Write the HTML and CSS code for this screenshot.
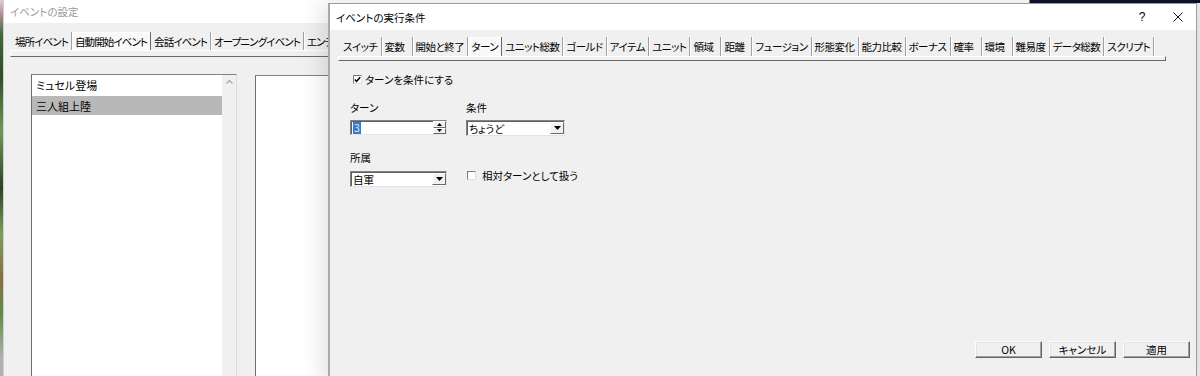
FILE: index.html
```html
<!DOCTYPE html>
<html lang="ja">
<head>
  <meta charset="UTF-8">
  <title>イベントの実行条件</title>
  <link rel="stylesheet" href="styles.css">
</head>
<body>
  <div class="desktop">
    <!-- 壁紙の見えている部分 -->
    <div class="wallpaper-edge"></div>
    <div class="wallpaper-corner"></div>

    <!-- 背面ウィンドウ：イベントの設定 -->
    <section class="window window-back">
      <header class="titlebar"><span class="title">イベントの設定</span></header>
      <div class="window-body">
        <nav class="tabs">
          <span class="tab">場所イベント</span>
          <span class="tab is-active">自動開始イベント</span>
          <span class="tab">会話イベント</span>
          <span class="tab">オープニングイベント</span>
          <span class="tab">エンディングイベント</span>
        </nav>
        <div class="tab-rule"></div>
        <div class="event-panes">
          <div class="listbox">
            <ul class="list-items">
              <li>ミュセル登場</li>
              <li class="is-selected">三人組上陸</li>
            </ul>
            <div class="scrollbar">
              <svg class="scroll-up" viewBox="0 0 7 4"><polyline points="0.5,3.5 3.5,0.5 6.5,3.5" /></svg>
            </div>
          </div>
          <div class="detail-pane"></div>
        </div>
      </div>
    </section>

    <!-- 前面ダイアログ：イベントの実行条件 -->
    <section class="window window-front">
      <header class="titlebar">
        <span class="title">イベントの実行条件</span>
        <div class="caption-buttons">
          <span class="caption-btn">?</span>
          <span class="caption-btn">
            <svg class="close-icon" viewBox="0 0 10 10"><line x1="0.5" y1="0.5" x2="9.5" y2="9.5" /><line x1="9.5" y1="0.5" x2="0.5" y2="9.5" /></svg>
          </span>
        </div>
      </header>
      <div class="window-body">
        <nav class="tabs">
          <span class="tab">スイッチ</span>
          <span class="tab">変数</span>
          <span class="tab">開始と終了</span>
          <span class="tab is-active">ターン</span>
          <span class="tab">ユニット総数</span>
          <span class="tab">ゴールド</span>
          <span class="tab">アイテム</span>
          <span class="tab">ユニット</span>
          <span class="tab">領域</span>
          <span class="tab">距離</span>
          <span class="tab">フュージョン</span>
          <span class="tab">形態変化</span>
          <span class="tab">能力比較</span>
          <span class="tab">ボーナス</span>
          <span class="tab">確率</span>
          <span class="tab">環境</span>
          <span class="tab">難易度</span>
          <span class="tab">データ総数</span>
          <span class="tab">スクリプト</span>
        </nav>
        <div class="tab-rule"></div>

        <label class="check-row">
          <span class="checkbox is-checked">
            <svg viewBox="0 0 7 7"><polyline points="0.8,3.4 2.6,5.3 6.2,1.2" /></svg>
          </span>
          ターンを条件にする
        </label>

        <div class="form-grid">
          <span class="field-label">ターン</span>
          <span class="field-label">条件</span>

          <div class="spin">
            <span class="edit-text"><span class="selected-text">3</span></span>
            <span class="spin-buttons">
              <span class="spin-btn"><svg viewBox="0 0 5 3"><polygon points="0,3 2.5,0 5,3" /></svg></span>
              <span class="spin-btn"><svg viewBox="0 0 5 3"><polygon points="0,0 5,0 2.5,3" /></svg></span>
            </span>
          </div>
          <div class="combo combo-wide">
            <span class="edit-text">ちょうど</span>
            <span class="drop-btn"><svg viewBox="0 0 7 4"><polygon points="0,0 7,0 3.5,4" /></svg></span>
          </div>

          <span class="field-label field-label-lower">所属</span>
          <span class="field-label field-label-lower"></span>

          <div class="combo">
            <span class="edit-text">自軍</span>
            <span class="drop-btn"><svg viewBox="0 0 7 4"><polygon points="0,0 7,0 3.5,4" /></svg></span>
          </div>
          <label class="check-inline">
            <span class="checkbox"></span>
            相対ターンとして扱う
          </label>
        </div>

        <footer class="dialog-buttons">
          <button class="push-btn">OK</button>
          <button class="push-btn">キャンセル</button>
          <button class="push-btn">適用</button>
        </footer>
      </div>
    </section>
  </div>
</body>
</html>
```

FILE: styles.css
```css
/* Reset */
* { margin: 0; padding: 0; box-sizing: border-box; }

:root {
  --face: #f0f0f0;
  --shadow: #a0a0a0;
  --dark: #696969;
  --light: #fff;
  --ui-font: "Noto Sans CJK JP", "Noto Sans", sans-serif;
}

html, body {
  width: 1200px;
  height: 376px;
  overflow: hidden;
  background: #ececec;
  font-family: var(--ui-font);
  font-size: 10.5px;
  font-feature-settings: "palt";
  color: #000;
}

.desktop {
  position: relative;
  width: 1200px;
  height: 376px;
}

/* 壁紙 */
.wallpaper-edge {
  position: absolute;
  left: 0;
  top: 0;
  width: 3px;
  height: 376px;
  background: linear-gradient(#d9d0d6 0, #c792a8 3%, #3f6b36 9%, #2d4d25 20%, #6f9a55 35%, #2a4222 50%, #77a05a 62%, #8c6e3e 74%, #5f8f47 84%, #b0b0b0 95%);
}

.wallpaper-corner {
  position: absolute;
  left: 1030px;
  top: 0;
  width: 170px;
  height: 3px;
  background: #0b1131;
}

/* ウィンドウ共通 */
.window {
  position: absolute;
  display: flex;
  flex-direction: column;
  background: var(--face);
}

.window-back {
  left: 3px;
  top: 0;
  width: 1027px;
  height: 380px;
  border-left: 1px solid #cfcfcf;
  border-right: 1px solid #8a8a8a;
}

.window-front {
  left: 328px;
  top: 3px;
  width: 869px;
  height: 380px;
  border: 1px solid #9c9c9c;
  border-left: 2px solid #a9a9a9;
  box-shadow: -5px 0 22px rgba(0, 0, 0, 0.13);
}

.titlebar {
  flex: none;
  display: flex;
  align-items: center;
  background: #fff;
}

.window-back .titlebar {
  height: 23px;
  padding-left: 6px;
  color: #9b9b9b;
}

.window-front .titlebar {
  height: 26px;
  padding-left: 6px;
}

.caption-buttons {
  margin-left: auto;
  display: flex;
}

.caption-btn {
  width: 36px;
  height: 26px;
  display: flex;
  align-items: center;
  justify-content: center;
  font-family: "Liberation Sans", sans-serif;
  font-size: 12px;
}

.close-icon {
  width: 10px;
  height: 10px;
  stroke: #111;
  stroke-width: 1;
}

.window-body {
  flex: 1;
  display: flex;
  flex-direction: column;
}

/* ボタン型タブ */
.tabs {
  display: flex;
  flex: none;
}

.tab {
  flex: none;
  display: flex;
  align-items: center;
  padding: 0 3px;
  min-width: 31px;
  letter-spacing: -0.5px;
  border-right: 1px solid var(--shadow);
  box-shadow: 1px 0 0 var(--light);
  white-space: nowrap;
}

.tab.is-active {
  background: #f9f9f9;
  border-right-color: var(--dark);
  box-shadow: inset 1px 1px 0 var(--light);
}

.window-back .tabs {
  margin-top: 9px;
  height: 18px;
  padding-left: 8px;
}

.window-back .tab {
  letter-spacing: -0.9px;
}

.window-front .tabs {
  margin-top: 7px;
  height: 19px;
  padding-left: 10px;
}

.tab-rule {
  flex: none;
  border: 1px solid;
  border-color: var(--light) var(--dark) var(--dark) var(--light);
}

.window-back .tab-rule {
  margin-left: 6px;
  width: 1010px;
  height: 7px;
}

.window-front .tab-rule {
  margin-left: 8px;
  width: 828px;
  height: 5px;
}

/* 背面：イベント一覧 */
.event-panes {
  flex: 1;
  display: flex;
  margin-top: 17px;
}

.listbox {
  width: 206px;
  margin-left: 27px;
  display: flex;
  background: #fff;
  border-top: 1px solid #828282;
  border-left: 1px solid #6f6f6f;
  border-right: 1px solid #dcdcdc;
}

.list-items {
  flex: 1;
  list-style: none;
}

.list-items li {
  height: 20px;
  line-height: 20px;
  padding-left: 4px;
  font-size: 11px;
}

.list-items li.is-selected {
  background: #b8b8b8;
  margin-top: 1px;
  height: 19px;
}

.scrollbar {
  width: 14px;
  background: var(--face);
  display: flex;
  justify-content: center;
  padding-top: 5px;
}

.scroll-up {
  width: 7px;
  height: 4px;
  fill: none;
  stroke: #a6a6a6;
  stroke-width: 1.2;
}

.detail-pane {
  flex: 1;
  margin: 1px 0 0 18px;
  background: #fff;
  border-top: 1px solid #828282;
  border-left: 1px solid #6f6f6f;
}

/* 前面：条件フォーム */
.check-row {
  margin: 11px 0 0 23px;
  height: 14px;
  display: flex;
  align-items: center;
  gap: 3px;
}

.checkbox {
  flex: none;
  width: 9px;
  height: 9px;
  background: #fff;
  border: 1px solid;
  border-color: #7c7c7c #e0e0e0 #e0e0e0 #7c7c7c;
  display: flex;
  align-items: center;
  justify-content: center;
}

.checkbox svg {
  width: 7px;
  height: 7px;
  fill: none;
  stroke: #000;
  stroke-width: 1.5;
}

.form-grid {
  margin: 15px 0 0 20px;
  display: grid;
  grid-template-columns: 97px 99px;
  column-gap: 19px;
  align-items: start;
}

.field-label {
  height: 14px;
  line-height: 14px;
  margin-bottom: 5px;
}

.field-label-lower {
  margin-top: 15px;
  margin-bottom: 6px;
}

.spin,
.combo {
  display: flex;
  height: 16px;
  background: #fff;
  border: 1px solid;
  border-color: #828282 #e3e3e3 #e3e3e3 #828282;
  box-shadow: inset 1px 1px 0 #5f5f5f;
}

.spin {
  height: 15px;
}

.edit-text {
  flex: 1;
  display: flex;
  align-items: center;
  padding-left: 2px;
  font-size: 10.5px;
}

.selected-text {
  background: #3a78c8;
  color: #dfe8f5;
  padding: 0 1px;
  line-height: 12px;
}

.spin-buttons {
  width: 13px;
  display: flex;
  flex-direction: column;
}

.spin-btn {
  flex: 1;
  display: flex;
  align-items: center;
  justify-content: center;
  background: var(--face);
  border: 1px solid;
  border-color: var(--light) var(--dark) var(--dark) var(--light);
}

.spin-btn svg {
  width: 5px;
  height: 3px;
  fill: #000;
}

.drop-btn {
  width: 14px;
  margin: 1px 0 1px;
  display: flex;
  align-items: center;
  justify-content: center;
  background: var(--face);
  border: 1px solid;
  border-color: var(--light) var(--dark) var(--dark) var(--light);
}

.drop-btn svg {
  width: 7px;
  height: 4px;
  fill: #000;
}

.check-inline {
  height: 9px;
  margin: 0 0 0 1px;
  display: flex;
  align-items: center;
  gap: 6px;
  white-space: nowrap;
}

/* 下部ボタン */
.dialog-buttons {
  margin-top: auto;
  padding: 0 6px 24px 0;
  display: flex;
  justify-content: flex-end;
  gap: 7px;
}

.push-btn {
  width: 67px;
  height: 17px;
  font-family: var(--ui-font);
  font-size: 10.5px;
  font-feature-settings: "palt";
  color: #000;
  background: var(--face);
  border: 1px solid;
  border-color: #fcfcfc #646464 #646464 #fcfcfc;
  box-shadow: inset -1px -1px 0 #a0a0a0, inset 1px 1px 0 #e3e3e3;
}
```
